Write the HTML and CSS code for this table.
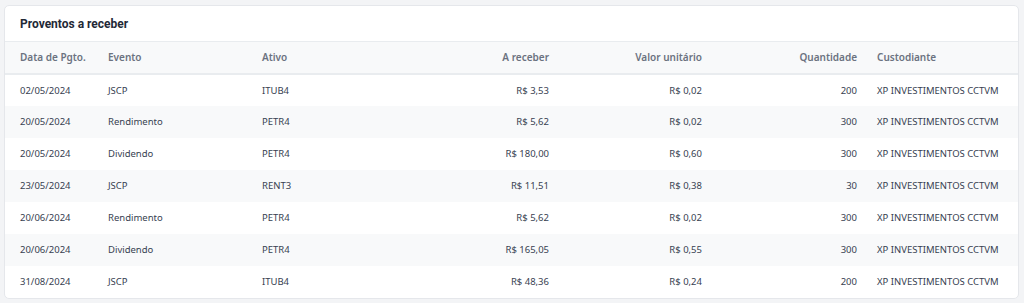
FILE: index.html
```html
<!DOCTYPE html>
<html lang="pt-BR">
<head>
<meta charset="utf-8">
<title>Proventos a receber</title>
<link rel="stylesheet" href="styles.css">
</head>
<body>
<div class="page">
  <section class="card">
    <h2 class="card-title">Proventos a receber</h2>
    <table class="tbl">
      <colgroup>
        <col class="c1"><col class="c2"><col class="c3"><col class="c4"><col class="c5"><col class="c6"><col class="c7">
      </colgroup>
      <thead>
        <tr>
          <th>Data de Pgto.</th>
          <th>Evento</th>
          <th>Ativo</th>
          <th class="num">A receber</th>
          <th class="num">Valor unitário</th>
          <th class="num">Quantidade</th>
          <th>Custodiante</th>
        </tr>
      </thead>
      <tbody>
        <tr><td>02/05/2024</td><td>JSCP</td><td>ITUB4</td><td class="num">R$ 3,53</td><td class="num">R$ 0,02</td><td class="num">200</td><td>XP INVESTIMENTOS CCTVM</td></tr>
        <tr><td>20/05/2024</td><td>Rendimento</td><td>PETR4</td><td class="num">R$ 5,62</td><td class="num">R$ 0,02</td><td class="num">300</td><td>XP INVESTIMENTOS CCTVM</td></tr>
        <tr><td>20/05/2024</td><td>Dividendo</td><td>PETR4</td><td class="num">R$ 180,00</td><td class="num">R$ 0,60</td><td class="num">300</td><td>XP INVESTIMENTOS CCTVM</td></tr>
        <tr><td>23/05/2024</td><td>JSCP</td><td>RENT3</td><td class="num">R$ 11,51</td><td class="num">R$ 0,38</td><td class="num">30</td><td>XP INVESTIMENTOS CCTVM</td></tr>
        <tr><td>20/06/2024</td><td>Rendimento</td><td>PETR4</td><td class="num">R$ 5,62</td><td class="num">R$ 0,02</td><td class="num">300</td><td>XP INVESTIMENTOS CCTVM</td></tr>
        <tr><td>20/06/2024</td><td>Dividendo</td><td>PETR4</td><td class="num">R$ 165,05</td><td class="num">R$ 0,55</td><td class="num">300</td><td>XP INVESTIMENTOS CCTVM</td></tr>
        <tr><td>31/08/2024</td><td>JSCP</td><td>ITUB4</td><td class="num">R$ 48,36</td><td class="num">R$ 0,24</td><td class="num">200</td><td>XP INVESTIMENTOS CCTVM</td></tr>
      </tbody>
    </table>
  </section>
</div>
</body>
</html>
```
FILE: styles.css
```css
* { box-sizing: border-box; }
html, body { margin: 0; padding: 0; background: #f3f4f6; }
body { font-family: "Noto Sans", "Open Sans", sans-serif; color: #374151; }
.page { padding: 5px 5px 0 4px; }
.card {
  background: #fff;
  border: 1px solid #e5e7eb;
  border-radius: 5px;
  overflow: hidden;
  width: 1015px;
}
.card-title {
  margin: 0;
  height: 35px;
  padding: 0 15px;
  display: flex;
  align-items: center;
  font-family: Roboto, Inter, sans-serif;
  font-size: 12px;
  font-weight: 700;
  color: #1f2937;
}
.tbl { width: 100%; border-collapse: collapse; table-layout: fixed; }
.c1 { width: 93px; }
.c2 { width: 154px; }
.c3 { width: 154px; }
.c4 { width: 153px; }
.c5 { width: 153px; }
.c6 { width: 155px; }
.c7 { width: 151px; }
.tbl th, .tbl td {
  padding: 0 10px;
  text-align: left;
  white-space: nowrap;
}
.tbl th:first-child, .tbl td:first-child { padding-left: 15px; }
.tbl thead tr {
  background: #f8f9fa;
  border-top: 1px solid #e9ecef;
  border-bottom: 2px solid #e9ecef;
}
.tbl th {
  height: 32px;
  font-size: 10px;
  font-weight: 600;
  color: #6b7280;
}
.tbl td { height: 32px; font-size: 9.5px; color: #374151; }
.tbl tbody tr:nth-child(even) { background: #f8f9fa; }
.tbl .num { text-align: right; }
```
